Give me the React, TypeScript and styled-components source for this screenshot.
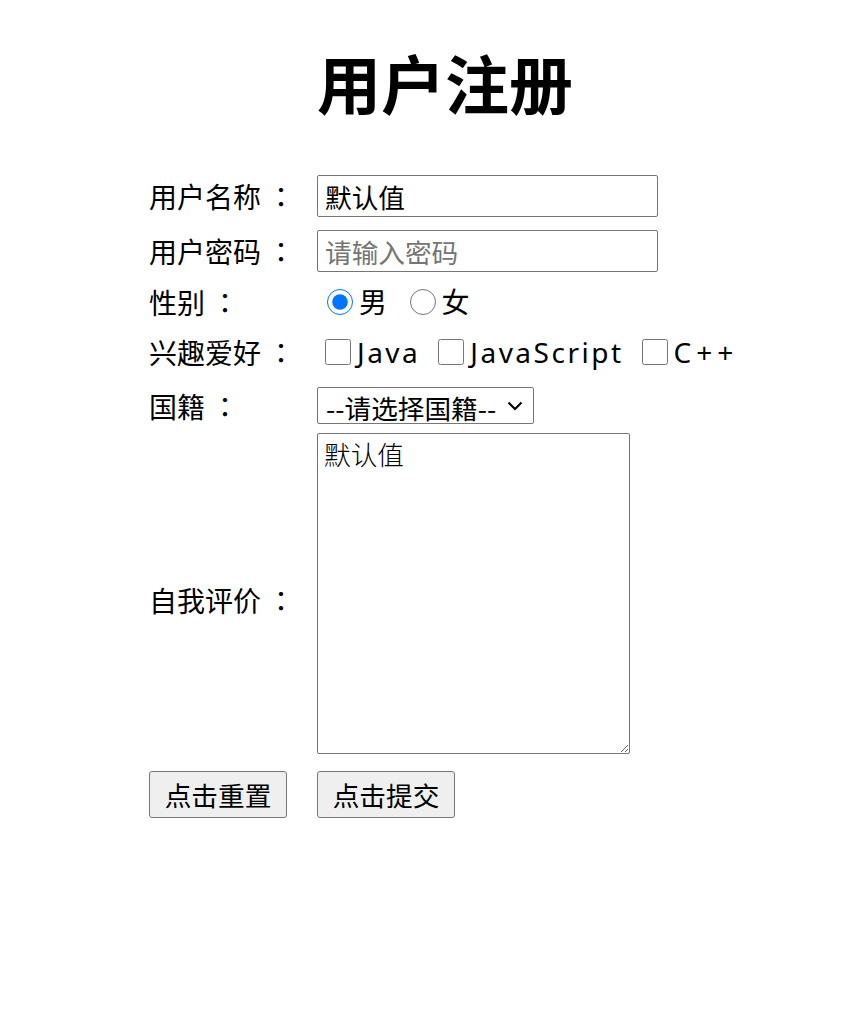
import React from 'react'
import styled, { createGlobalStyle } from 'styled-components'

const FONT = `"Noto Sans", "Noto Sans CJK SC", sans-serif`
const CJK_FONT = `"Noto Sans CJK SC", sans-serif`
const CONTROL_SIZE = '26.67px'

const GlobalStyle = createGlobalStyle`
  body {
    margin: 0;
    background: #fff;
    color: #000;
    font-family: ${FONT};
  }
`

const Page = styled.div`
  width: 858px;
  margin-left: 16px;
  padding-top: 49px;
`

const Title = styled.h1`
  margin: 0;
  height: 64px;
  line-height: 64px;
  font-family: ${CJK_FONT};
  font-size: 64px;
  font-weight: 700;
  text-align: center;
`

const Form = styled.form`
  width: 592px;
  margin: 62px auto 0;
`

const Row = styled.div<{ $h: number; $mt?: number }>`
  display: grid;
  grid-template-columns: 168px 1fr;
  align-items: center;
  height: ${({ $h }) => $h}px;
  margin-top: ${({ $mt = 0 }) => $mt}px;
`

const Label = styled.span<{ $shift?: number }>`
  font-family: ${CJK_FONT};
  font-size: 28px;
  line-height: 1;
  white-space: nowrap;
  padding-top: ${({ $shift = 0 }) => $shift}px;
`

// full-width colon sits towards the right of its cell, as in the original font
const Colon = styled.span`
  display: inline-block;
  font-family: "Noto Sans CJK TC", sans-serif;
  transform: translateX(6px);
`

const Field = styled.div`
  display: flex;
  align-items: center;
  height: 100%;
  font-size: 28px;
  white-space: nowrap;
`

const TextInput = styled.input`
  box-sizing: border-box;
  width: 341px;
  height: 42px;
  padding: 0 7px;
  border: 1px solid #767676;
  border-radius: 2px;
  font-family: ${CJK_FONT};
  font-size: ${CONTROL_SIZE};
  color: #000;

  &::placeholder {
    color: #757575;
  }
`

const Choice = styled.input`
  width: 26px;
  height: 26px;
  margin: 0 6px 0 ${({ type }) => (type === 'radio' ? 10 : 8)}px;
  accent-color: #0075ff;
`

const ChoiceText = styled.span<{ $gap?: number; $ls?: number }>`
  margin-right: ${({ $gap = 10 }) => $gap}px;
  line-height: 1;
  letter-spacing: ${({ $ls = 2.5 }) => $ls}px;
`

const SelectBox = styled.div`
  position: relative;
  display: inline-flex;
`

const Select = styled.select`
  box-sizing: border-box;
  width: 217px;
  height: 37px;
  padding: 0 30px 0 8px;
  border: 1px solid #767676;
  border-radius: 2px;
  background: #fff;
  appearance: none;
  font-family: ${CJK_FONT};
  font-size: ${CONTROL_SIZE};
  color: #000;
`

const Chevron = styled.svg`
  position: absolute;
  right: 11px;
  top: 14px;
  pointer-events: none;
`

const TextArea = styled.textarea`
  box-sizing: border-box;
  width: 313px;
  height: 321px;
  padding: 4px 6px;
  border: 1px solid #767676;
  border-radius: 2px;
  font-family: "Noto Sans CJK SC", serif;
  font-weight: 300;
  font-size: ${CONTROL_SIZE};
  line-height: 1.2;
  color: #000;
`

const Button = styled.button`
  box-sizing: border-box;
  width: 138px;
  height: 47px;
  padding: 0;
  border: 1px solid #767676;
  border-radius: 3px;
  background: #efefef;
  font-family: ${CJK_FONT};
  font-size: ${CONTROL_SIZE};
  color: #000;
`

const FieldLabel = ({ text, shift }: { text: string; shift?: number }): React.ReactElement => (
  <Label $shift={shift}>
    {text}
    <Colon>：</Colon>
  </Label>
)

export default function App(): React.ReactElement {
  return (
    <>
      <GlobalStyle />
      <Page>
        <Title>用户注册</Title>
        <Form onSubmit={(e) => e.preventDefault()}>
          <Row $h={42}>
            <FieldLabel text="用户名称" />
            <Field>
              <TextInput type="text" defaultValue="默认值" />
            </Field>
          </Row>
          <Row $h={42} $mt={13}>
            <FieldLabel text="用户密码" />
            <Field>
              <TextInput type="password" placeholder="请输入密码" />
            </Field>
          </Row>
          <Row $h={42} $mt={9}>
            <FieldLabel text="性别" />
            <Field>
              <Choice type="radio" name="gender" defaultChecked />
              <ChoiceText $gap={10}>男</ChoiceText>
              <Choice type="radio" name="gender" />
              <ChoiceText>女</ChoiceText>
            </Field>
          </Row>
          <Row $h={42} $mt={8}>
            <FieldLabel text="兴趣爱好" />
            <Field>
              <Choice type="checkbox" />
              <ChoiceText>Java</ChoiceText>
              <Choice type="checkbox" />
              <ChoiceText>JavaScript</ChoiceText>
              <Choice type="checkbox" />
              <ChoiceText $ls={5}>C++</ChoiceText>
            </Field>
          </Row>
          <Row $h={37} $mt={14}>
            <FieldLabel text="国籍" />
            <Field>
              <SelectBox>
                <Select defaultValue="">
                  <option value="">--请选择国籍--</option>
                  <option value="cn">中国</option>
                  <option value="us">美国</option>
                  <option value="jp">日本</option>
                </Select>
                <Chevron width="16" height="10" viewBox="0 0 16 10">
                  <path d="M1.5 1.5 L8 8 L14.5 1.5" fill="none" stroke="#000" strokeWidth="2" />
                </Chevron>
              </SelectBox>
            </Field>
          </Row>
          <Row $h={321} $mt={9}>
            <FieldLabel text="自我评价" shift={12} />
            <Field>
              <TextArea defaultValue="默认值" />
            </Field>
          </Row>
          <Row $h={47} $mt={17}>
            <Field>
              <Button type="reset">点击重置</Button>
            </Field>
            <Field>
              <Button type="submit">点击提交</Button>
            </Field>
          </Row>
        </Form>
      </Page>
    </>
  )
}
